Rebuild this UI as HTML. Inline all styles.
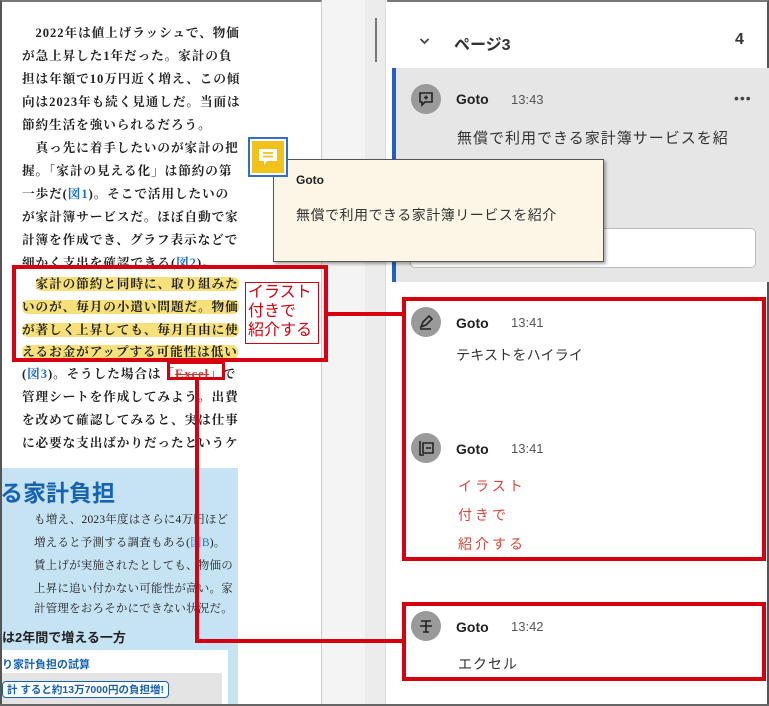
<!DOCTYPE html>
<html><head><meta charset="utf-8">
<style>
*{margin:0;padding:0;box-sizing:border-box}
body{width:769px;height:706px;overflow:hidden;background:#fff;position:relative;font-family:"Liberation Sans","Noto Sans CJK JP",sans-serif}
.a{position:absolute;white-space:nowrap}
.t{position:absolute;left:22px;font-family:"Liberation Serif","Noto Serif CJK SC",serif;font-weight:bold;font-size:12.6px;letter-spacing:0.95px;color:#222;line-height:18px}
.hl{background:#f6e07a;border-radius:6px}
.b{color:#1d6fc0}
.s{position:absolute;left:34px;font-family:"Liberation Serif","Noto Serif CJK SC",serif;font-size:11.5px;letter-spacing:0.2px;color:#222;line-height:16px}
.av{position:absolute;width:30px;height:30px;border-radius:50%;background:#9a9a9a}
.nm{position:absolute;font-weight:bold;font-size:14px;color:#222}
.tm{position:absolute;font-size:13px;color:#555}
.cm{position:absolute;font-size:14px;color:#333;letter-spacing:0.2px}
.red{position:absolute;border:4px solid #d7000f}
</style></head><body>
<div class="a" style="left:0;top:0;width:322px;height:706px;border-left:2px solid #555;border-right:1px solid #ccc;border-top:2px solid #777"></div>
<div class="t" style="top:24px">　2022年は値上げラッシュで、物価</div>
<div class="t" style="top:47px">が急上昇した1年だった。家計の負</div>
<div class="t" style="top:70px">担は年額で10万円近く増え、この傾</div>
<div class="t" style="top:93px">向は2023年も続く見通しだ。当面は</div>
<div class="t" style="top:116px">節約生活を強いられるだろう。</div>
<div class="t" style="top:139px">　真っ先に着手したいのが家計の把</div>
<div class="t" style="top:162px">握。「家計の見える化」は節約の第</div>
<div class="t" style="top:185px">一歩だ(<span class="b">図1</span>)。そこで活用したいの</div>
<div class="t" style="top:208px">が家計簿サービスだ。ほぼ自動で家</div>
<div class="t" style="top:231px">計簿を作成でき、グラフ表示などで</div>
<div class="t" style="top:254px">細かく支出を確認できる(<span class="b">図2</span>)。</div>
<div class="t" style="top:275px">　<span class="hl">家計の節約と同時に、取り組みた</span></div>
<div class="t" style="top:298px"><span class="hl">いのが、毎月の小遣い問題だ。物価</span></div>
<div class="t" style="top:321px"><span class="hl">が著しく上昇しても、毎月自由に使</span></div>
<div class="t" style="top:343px"><span class="hl">えるお金がアップする可能性は低い</span></div>
<div class="t" style="top:365px">(<span class="b">図3</span>)。そうした場合は「<s style="color:#c33">Excel</s>」で</div>
<div class="t" style="top:388px">管理シートを作成してみよう。出費</div>
<div class="t" style="top:411px">を改めて確認してみると、実は仕事</div>
<div class="t" style="top:434px">に必要な支出ばかりだったというケ</div>
<div class="a" style="left:2px;top:468px;width:236px;height:238px;background:#c6e3f4"></div>
<div class="a" style="left:0;top:474px;font-size:23px;font-weight:bold;color:#1763b0">る家計負担</div>
<div class="s" style="top:512px">も増え、2023年度はさらに4万円ほど</div>
<div class="s" style="top:535px">増えると予測する調査もある(<span class="b">図B</span>)。</div>
<div class="s" style="top:558px">賃上げが実施されたとしても、物価の</div>
<div class="s" style="top:581px">上昇に追い付かない可能性が高い。家</div>
<div class="s" style="top:601px">計管理をおろそかにできない状況だ。</div>
<div class="a" style="left:2px;top:627px;font-size:13px;font-weight:bold;color:#222">は2年間で増える一方</div>
<div class="a" style="left:2px;top:650px;width:226px;height:56px;background:#fff"></div>
<div class="a" style="left:2px;top:656px;font-size:11px;font-weight:bold;color:#1763b0">り家計負担の試算</div>
<div class="a" style="left:2px;top:673px;width:220px;height:33px;background:#e4e4e4"></div>
<div class="a" style="left:2px;top:681px;padding:0 4px;font-size:10.5px;font-weight:bold;color:#1763b0;background:#fff;border:1.5px solid #1763b0;border-radius:4px">計 すると約13万7000円の負担増!</div>
<div class="a" style="left:322px;top:0;width:64px;height:706px;background:#f4f4f4;border-right:1px solid #ddd"></div>
<div class="a" style="left:365px;top:0;width:20px;height:706px;background:#ececec"></div>
<div class="a" style="left:375px;top:18px;width:2px;height:44px;background:#777"></div>
<div class="a" style="left:387px;top:0;width:382px;height:706px;border-right:2px solid #555;border-top:2px solid #777;border-bottom:2px solid #666"></div>
<div class="a" style="left:0;top:704px;width:769px;height:2px;background:#666"></div>
<svg class="a" style="left:419px;top:37px" width="11" height="8" viewBox="0 0 11 8"><path d="M1.5 2l4 4 4-4" fill="none" stroke="#444" stroke-width="1.8"/></svg>
<div class="a" style="left:454px;top:31px;font-size:16px;font-weight:bold;color:#333">ページ3</div>
<div class="a" style="left:735px;top:31px;font-size:16px;font-weight:bold;color:#333">4</div>
<div class="a" style="left:392px;top:68px;width:377px;height:214px;background:#e6e6e6;border-left:4px solid #1f5fbf"></div>
<div class="av" style="left:411px;top:84px"></div>
<svg class="a" style="left:417px;top:90px" width="18" height="18" viewBox="0 0 18 18"><path d="M3 3h12v9H8l-3 3v-3H3z" fill="none" stroke="#222" stroke-width="1.6"/><path d="M9 5.5v4M7 7.5h4" stroke="#222" stroke-width="1.4"/></svg>
<div class="nm" style="left:456px;top:91px">Goto</div>
<div class="tm" style="left:511px;top:92px">13:43</div>
<div class="a" style="left:734px;top:90px;font-size:14px;color:#444;letter-spacing:1px">•••</div>
<div class="cm" style="left:457px;top:127px;font-size:15px;letter-spacing:1px">無償で利用できる家計簿サービスを紹</div>
<div class="a" style="left:410px;top:228px;width:346px;height:40px;background:#fff;border:1px solid #bbb;border-radius:5px"></div>
<div class="a" style="left:273px;top:159px;width:331px;height:103px;background:#fbf6e6;border:1px solid #555;box-shadow:2px 2px 3px rgba(0,0,0,.35)"></div>
<div class="a" style="left:296px;top:173px;font-size:12px;font-weight:bold;color:#222">Goto</div>
<div class="a" style="left:296px;top:205px;font-size:14px;color:#333;letter-spacing:.5px">無償で利用できる家計簿リービスを紹介</div>
<div class="a" style="left:248px;top:137px;width:40px;height:40px;border:2px solid #2f6fc4;background:#fff;padding:2px"><div style="width:32px;height:32px;background:#f1c21b"></div></div>
<svg class="a" style="left:256px;top:145px" width="24" height="24" viewBox="0 0 24 24"><path d="M3 4h18v12H11l-3 4v-4H3z" fill="#fff"/><path d="M7 8h10M7 11.5h10" stroke="#f1c21b" stroke-width="1.8"/></svg>
<div class="av" style="left:411px;top:307px"></div>
<svg class="a" style="left:417px;top:313px" width="18" height="18" viewBox="0 0 18 18"><path d="M4 14l2-5 6-6 3 3-6 6zM3 16h11" fill="none" stroke="#222" stroke-width="1.6"/></svg>
<div class="nm" style="left:456px;top:315px">Goto</div>
<div class="tm" style="left:511px;top:315px">13:41</div>
<div class="cm" style="left:456px;top:345px">テキストをハイライ</div>
<div class="av" style="left:411px;top:433px"></div>
<svg class="a" style="left:417px;top:439px" width="18" height="18" viewBox="0 0 18 18"><path d="M3 2v14h4M6 4h10v10H6z" fill="none" stroke="#222" stroke-width="1.6"/><path d="M9 9h5" stroke="#222" stroke-width="1.5"/></svg>
<div class="nm" style="left:456px;top:441px">Goto</div>
<div class="tm" style="left:511px;top:441px">13:41</div>
<div class="cm" style="left:458px;top:476px;color:#d9453a;letter-spacing:3px">イラスト</div>
<div class="cm" style="left:458px;top:505px;color:#d9453a;letter-spacing:3px">付きで</div>
<div class="cm" style="left:458px;top:534px;color:#d9453a;letter-spacing:3px">紹介する</div>
<div class="av" style="left:411px;top:611px"></div>
<svg class="a" style="left:417px;top:617px" width="18" height="18" viewBox="0 0 18 18"><path d="M4 4h10M3 9h12M9 4v11M6 15h6" fill="none" stroke="#222" stroke-width="1.6"/></svg>
<div class="nm" style="left:456px;top:619px">Goto</div>
<div class="tm" style="left:511px;top:619px">13:42</div>
<div class="cm" style="left:458px;top:654px;letter-spacing:1px">エクセル</div>
<div class="red" style="left:12px;top:265px;width:316px;height:97px"></div>
<div class="a" style="left:245px;top:282px;width:74px;height:62px;border:1px solid #d7000f;background:#fff;color:#d7000f;font-size:16px;line-height:19px;padding-left:2px;white-space:normal">イラスト<br>付きで<br>紹介する</div>
<div class="a" style="left:327px;top:312px;width:78px;height:4px;background:#d7000f"></div>
<div class="red" style="left:402px;top:297px;width:364px;height:264px"></div>
<div class="red" style="left:402px;top:602px;width:364px;height:79px"></div>
<div class="a" style="left:167px;top:361px;width:58px;height:19px;border:3px solid #d7000f"></div>
<div class="a" style="left:195px;top:378px;width:4px;height:265px;background:#d7000f"></div>
<div class="a" style="left:195px;top:639px;width:210px;height:4px;background:#d7000f"></div>
</body></html>
